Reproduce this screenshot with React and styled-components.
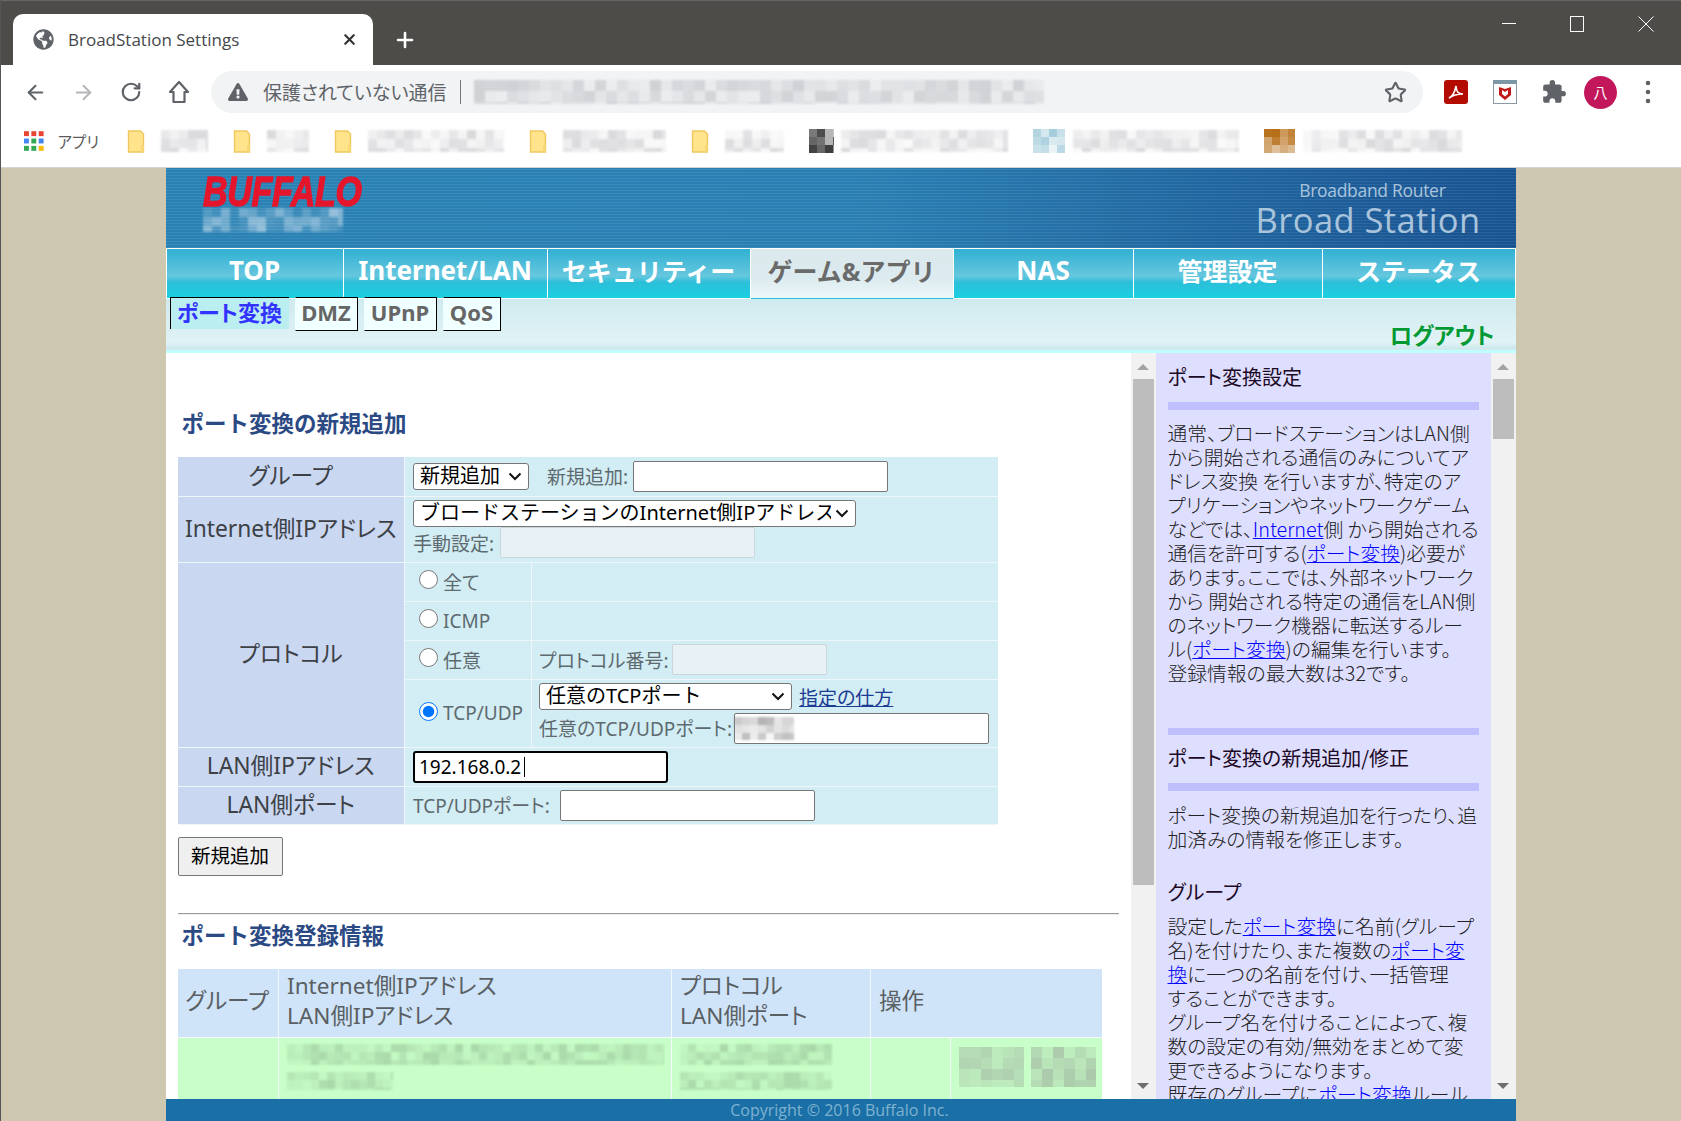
import * as React from 'react';
import styled, { createGlobalStyle } from 'styled-components';
import { ArrowLeft, ArrowRight, RotateCw, Star, X, Plus } from 'lucide-react';
import { FaGlobeAmericas, FaExclamationTriangle } from 'react-icons/fa';
import { MdExtension } from 'react-icons/md';

const JP = '"Noto Sans", "Noto Sans CJK JP", sans-serif';
const CHEVRON = "url(\"data:image/svg+xml,%3Csvg xmlns='http://www.w3.org/2000/svg' width='14' height='9' viewBox='0 0 14 9'%3E%3Cpath d='M1.5 1.5 7 7l5.5-5.5' fill='none' stroke='%23111' stroke-width='2'/%3E%3C/svg%3E\")";

const GlobalStyle = createGlobalStyle`
    html, body {
        margin: 0;
        padding: 0;
        height: 1121px;
        overflow: hidden;
        background: #cdc8af;
        font-family: ${JP};
    }
    * { box-sizing: border-box; }
`;

const Window = styled.div`
    width: 1681px;
    height: 1121px;
    display: flex;
    flex-direction: column;
    overflow: hidden;
    border-left: 1px solid #555;
`;

/* browser chrome */
const TabStrip = styled.div`
    height: 65px;
    flex: none;
    background: #4d4c49;
    border-top: 1px solid #666;
    display: flex;
    align-items: flex-end;
    padding-left: 12px;
`;

const ActiveTab = styled.div`
    width: 360px;
    height: 51px;
    background: #fff;
    border-radius: 10px 10px 0 0;
    display: flex;
    align-items: center;
    padding: 0 15px 0 20px;
    color: #45474a;
    font-family: "Open Sans", sans-serif;
    font-size: 17px;
    gap: 14px;
    & > span { flex: 1; white-space: nowrap; }
`;

const NewTab = styled.div`
    color: #fff;
    margin: 0 0 13px 20px;
    display: flex;
`;

const WindowButtons = styled.div`
    margin-left: auto;
    align-self: flex-start;
    display: flex;
    gap: 53px;
    padding: 15px 27px 0 0;
`;

const Toolbar = styled.div`
    height: 60px;
    flex: none;
    background: #fff;
    display: flex;
    align-items: center;
    padding: 0 0 6px 23px;
    color: #5f6368;
`;

const NavIcon = styled.div`
    width: 48px;
    display: flex;
    color: ${(p) => (p.$off ? '#b4b6b9' : '#5f6368')};
`;

const Omnibox = styled.div`
    width: 1212px;
    height: 42px;
    margin-left: -5px;
    border-radius: 21px;
    background: #f1f3f4;
    display: flex;
    align-items: center;
    padding: 0 16px 0 17px;
`;

const SecurityText = styled.span`
    margin-left: 15px;
    font-size: 19px;
    color: #5f6368;
    font-family: "Noto Sans CJK JP", sans-serif;
    white-space: nowrap;
    padding-right: 14px;
    border-right: 1px solid #777;
    line-height: 24px;
    font-feature-settings: "palt";
`;

const ExtensionTray = styled.div`
    margin-left: 21px;
    display: flex;
    align-items: center;
`;

const Avatar = styled.div`
    width: 33px;
    height: 33px;
    border-radius: 50%;
    background: #c2185b;
    color: #fff;
    font-size: 14px;
    font-family: "Noto Sans CJK JP", sans-serif;
    display: flex;
    align-items: center;
    justify-content: center;
    margin: 0 28px 0 17px;
`;

const BookmarkBar = styled.div`
    height: 43px;
    flex: none;
    background: #fff;
    border-bottom: 1px solid #d4d4d4;
    display: flex;
    align-items: center;
    padding: 0 0 10px 23px;
    gap: 25px;
`;

const AppsLink = styled.div`
    display: flex;
    align-items: center;
    gap: 14px;
    width: 75px;
    font-size: 15.5px;
    color: #5a5a5a;
    font-family: "Noto Sans CJK JP", sans-serif;
    font-feature-settings: "palt";
    white-space: nowrap;
    margin-right: 3px;
`;

const Bookmark = styled.div`
    display: flex;
    align-items: center;
    gap: ${(p) => p.$gap || 16}px;
`;

/* router page */
const PageArea = styled.div`
    flex: 1;
    min-height: 0;
    display: flex;
    justify-content: center;
    background: #cdc8af;
    padding-right: 1px;
`;

const Frame = styled.div`
    width: 1350px;
    display: flex;
    flex-direction: column;
    background: #fff;
`;

const Banner = styled.header`
    height: 81px;
    flex: none;
    display: flex;
    justify-content: space-between;
    background:
        repeating-linear-gradient(0deg, rgba(255, 255, 255, .07) 0 1px, rgba(0, 0, 0, .02) 1px 3px),
        linear-gradient(90deg, #2a84b6, #2b82b6 50%, #1c5a98 92%, #1a5493);
    border-bottom: 1px solid #fff;
`;

const Brand = styled.div`
    padding: 7px 0 0 37px;
    display: flex;
    flex-direction: column;
`;

const BrandName = styled.div`
    height: 33px;
    font-family: "Liberation Sans", sans-serif;
    font-style: italic;
    font-weight: 700;
    font-size: 43px;
    line-height: 33px;
    color: #e5162c;
    letter-spacing: -.3px;
    transform: scaleX(.79);
    transform-origin: left center;
    -webkit-text-stroke: 1.4px #e5162c;
`;

const Product = styled.div`
    padding: 11px 35px 0 0;
    text-align: right;
    color: #a9c4db;
    font-family: "Open Sans", sans-serif;
    & > small {
        display: block;
        font-size: 17.5px;
        line-height: 22px;
        padding-right: 35px;
        letter-spacing: -.3px;
    }
    & > strong {
        display: block;
        font-weight: 400;
        font-size: 34.5px;
        line-height: 38px;
        letter-spacing: .4px;
    }
`;

const NavBar = styled.nav`
    height: 50px;
    flex: none;
    display: grid;
    grid-template-columns: 177px 204px 203px 203px 180px 189px 1fr;
    padding-left: 1px;
    background: #fff;
`;

const NavTab = styled.div`
    display: flex;
    align-items: center;
    justify-content: center;
    font-size: ${(p) => (p.$latin ? 26 : 25)}px;
    font-weight: 700;
    white-space: nowrap;
    border-right: 1px solid #fff;
    border-bottom: 1px solid ${(p) => (p.$active ? '#2cc0d8' : '#fff')};
    color: ${(p) => (p.$active ? '#6a6a6a' : '#fff')};
    padding-bottom: 7px;
    background: ${(p) => (p.$active
        ? 'linear-gradient(#dbe9ed, #dcebef 60%, #ecf7f9)'
        : 'linear-gradient(#30b0d3, #66c7de 55%, #2cbfd9 68%, #1bd0e1)')};
`;

const SubNav = styled.div`
    height: 54px;
    flex: none;
    display: flex;
    justify-content: space-between;
    padding-left: 4px;
    background: linear-gradient(#cfeaef, #e1f3f6 85%, #cfe9ed 96%);
    border-bottom: 3px solid #bfffff;
`;

const SubTabs = styled.div`
    display: flex;
    gap: 6px;
    margin-top: -2px;
    align-items: flex-start;
`;

const SubTab = styled.div`
    height: ${(p) => (p.$active ? 32 : 34)}px;
    width: ${(p) => p.$w}px;
    display: flex;
    align-items: center;
    justify-content: center;
    font-size: 22px;
    font-weight: 700;
    white-space: nowrap;
    padding-bottom: 5px;
    color: ${(p) => (p.$active ? '#3333ff' : '#666')};
    background: ${(p) => (p.$active ? '#bbeef0' : '#f0ffff')};
    border-top: 1px solid #000;
    border-left: 1px solid ${(p) => (p.$active ? '#000' : '#f0ffff')};
    border-right: ${(p) => (p.$active ? 'none' : '1px solid #000')};
    border-bottom: ${(p) => (p.$active ? 'none' : '1px solid #000')};
    font-feature-settings: "palt";
`;

const Logout = styled.a`
    align-self: flex-end;
    padding: 0 21px 0 0;
    font-size: 22.4px;
    line-height: 28px;
    font-weight: 700;
    color: #009933;
    font-feature-settings: "palt";
`;

const Workspace = styled.main`
    flex: 1;
    min-height: 0;
    display: flex;
    overflow: hidden;
`;

const FormPane = styled.section`
    width: 965px;
    flex: none;
    padding: 56px 0 0 12px;
    overflow: hidden;
`;

const Heading = styled.h2`
    margin: 0 0 18px 4px;
    font-size: 22.5px;
    line-height: 30px;
    font-weight: 700;
    color: #2b4a84;
`;

const FormTable = styled.table`
    width: 820px;
    table-layout: fixed;
    border-collapse: collapse;
    font-size: 19px;
    color: #5d6a70;
    font-feature-settings: "palt";
    & td {
        padding: 0;
        background: #d3edf4;
        border: solid #eef6fa;
        border-width: 0 0 1px 1px;
        white-space: nowrap;
    }
`;

const LabelCell = styled.td`
    && {
        background: #c9d7f1;
        color: #3d4146;
        font-size: 22.8px;
        text-align: center;
        border-left: none;
        padding-bottom: 4px;
    }
`;

const Row = styled.tr`
    height: ${(p) => p.$h}px;
`;

const Field = styled.div`
    display: flex;
    align-items: center;
    gap: ${(p) => p.$gap || 0}px;
    padding-left: ${(p) => p.$pad || 8}px;
    height: ${(p) => (p.$h ? `${p.$h}px` : 'auto')};
`;

const GroupLabel = styled.span`
    margin: 0 5px 0 18px;
`;

const RadioField = styled.label`
    display: flex;
    align-items: center;
    padding-left: 14px;
    font-size: 19px;
    & > input {
        width: 19px;
        height: 19px;
        margin: 0 5px 4px 0;
    }
`;

const Pick = styled.select`
    appearance: none;
    width: ${(p) => p.$w}px;
    height: 27px;
    font-family: ${JP};
    font-size: 20px;
    line-height: 24px;
    color: #000;
    background: #fff ${CHEVRON} no-repeat right 6px center;
    border: 1px solid #767676;
    border-radius: 3px;
    padding: 0 24px 4px 6px;
    font-feature-settings: normal;
`;

const TextBox = styled.input`
    width: ${(p) => p.$w || 255}px;
    height: 31px;
    font-family: ${JP};
    font-size: 19px;
    padding: 0 5px;
    border: 1px solid ${(p) => (p.disabled ? '#ccd6da' : '#767676')};
    border-radius: 2px;
    background: ${(p) => (p.disabled ? '#e8f2f6' : '#fff')};
`;

const FocusWrap = styled.div`
    position: relative;
    display: flex;
`;

const FocusBox = styled(TextBox)`
    width: 255px;
    height: 32px;
    border: 2px solid #000;
    border-radius: 3px;
    color: #000;
    outline: none;
    padding: 0 4px;
`;

const Caret = styled.span`
    position: absolute;
    left: 111px;
    top: 6px;
    width: 1px;
    height: 20px;
    background: #000;
`;

const HelpLink = styled.a`
    color: #1c3c94;
    text-decoration: underline;
    font-size: 19px;
`;

const Overlay = styled.div`
    position: absolute;
    left: ${(p) => p.$x}px;
    top: 4px;
`;

const AddButton = styled.button`
    display: block;
    width: 105px;
    height: 39px;
    margin-top: 12px;
    padding: 0 0 4px;
    font-family: ${JP};
    font-size: 19.5px;
    color: #000;
    background: #efefef;
    border: 1px solid #767676;
    border-radius: 2px;
`;

const Rule = styled.hr`
    width: 941px;
    margin: 37px 0 6px;
    border: none;
    border-top: 1px solid #999;
    border-bottom: 1px solid #eee;
`;

const ListTable = styled.table`
    width: 924px;
    table-layout: fixed;
    border-collapse: collapse;
    font-size: 22.6px;
    line-height: 30px;
    color: #5a5f63;
    font-feature-settings: "palt";
    & td {
        padding: 0 0 4px 8px;
        border: solid #f4f8fb;
        border-width: 0 0 1px 1px;
        white-space: nowrap;
    }
    & td:first-child { border-left: none; }
`;

const HeadRow = styled.tr`
    height: 69px;
    & td { background: #cfe4f9; }
`;

const DataRow = styled.tr`
    height: 62px;
    & td { background: #c8ffc8; }
`;

const MosaicStack = styled.div`
    display: flex;
    flex-direction: column;
    gap: 7px;
`;

const MosaicButtons = styled.div`
    display: flex;
    gap: 7px;
`;

const Scrollbar = styled.div`
    width: 25px;
    flex: none;
    background: #f1f1f1;
    display: flex;
    flex-direction: column;
    align-items: center;
    padding: 11px 0 10px;
`;

const ScrollArrow = styled.span`
    width: 0;
    height: 0;
    border-left: 6px solid transparent;
    border-right: 6px solid transparent;
    border-bottom: ${(p) => (p.$down ? 'none' : '6px solid #a3a3a3')};
    border-top: ${(p) => (p.$down ? '6px solid #6e6e6e' : 'none')};
    margin-top: ${(p) => (p.$down ? 'auto' : '0')};
`;

const ScrollThumb = styled.span`
    width: 21px;
    height: ${(p) => p.$h}px;
    margin-top: 9px;
    background: #bdbdbd;
`;

const HelpPane = styled.aside`
    width: 335px;
    flex: none;
    padding: 12px 12px 0;
    background: #dedeff;
    overflow: hidden;
    font-size: 19.8px;
    font-weight: 300;
    line-height: 24px;
    color: #222;
    font-family: "Noto Sans CJK JP", sans-serif;
    white-space: nowrap;
    font-feature-settings: "palt";
`;

const HelpTitle = styled.div`
    color: #1d0a26;
    font-size: 20px;
    font-weight: 400;
    margin-top: ${(p) => p.$top || 0}px;
    padding-bottom: 2px;
`;

const HelpBar = styled.div`
    height: ${(p) => p.$h || 8}px;
    margin-top: ${(p) => p.$top}px;
    background: #bfbfff;
`;

const HelpText = styled.p`
    margin: ${(p) => p.$top}px 0 0;
    & > a {
        color: #0000ff;
        text-decoration: underline;
    }
`;

const Footer = styled.footer`
    height: 22px;
    flex: none;
    background: #1a70a6;
    color: #7fb2d0;
    font-size: 16px;
    line-height: 22px;
    text-align: center;
    font-family: "Open Sans", sans-serif;
    padding-right: 2px;
`;

const MosaicSvg = styled.svg`
    display: block;
    flex: none;
    filter: blur(${(p) => p.$blur}px);
`;

// pixelated redaction blocks, same look as the censored parts of the capture
const Mosaic = ({ w, h, tone = '#8f8f99', cell = 9, max = 0.34, min = 0.05, seed = 1, blur = 0.8 }) => {
    const rects = [];
    const cols = Math.ceil(w / cell);
    const rows = Math.ceil(h / cell);
    for (let y = 0; y < rows; y++) {
        for (let x = 0; x < cols; x++) {
            const n = Math.abs(Math.sin((x + 1) * 12.9898 + (y + 1) * 78.233 + seed) * 43758.5453) % 1;
            rects.push(
                <rect
                    key={`${x}-${y}`}
                    x={x * cell}
                    y={y * cell}
                    width={cell}
                    height={cell}
                    fill={tone}
                    opacity={min + (max - min) * n}
                />,
            );
        }
    }
    return (
        <MosaicSvg width={w} height={h} viewBox={`0 0 ${w} ${h}`} $blur={blur} aria-hidden="true">
            {rects}
        </MosaicSvg>
    );
};

const FolderIcon = () => (
    <svg width="18" height="23" viewBox="0 0 18 23">
        <path d="M1.5 1h12l3 3v18h-15z" fill="#ffe48c" stroke="#efc75e" strokeWidth="1.4" />
        <path d="M14 15h3v7h-3z" fill="#f7d774" />
    </svg>
);

const HomeIcon = () => (
    <svg width="22" height="24" viewBox="0 0 22 24" fill="none" stroke="#5f6368" strokeWidth="2.2">
        <path d="M11 2 2 12h3.5v10h11V12H20z" strokeLinejoin="round" />
    </svg>
);

const AppsIcon = () => {
    const colors = ['#ea4335', '#ea4335', '#ea4335', '#4285f4', '#34a853', '#4285f4', '#34a853', '#34a853', '#fbbc04'];
    return (
        <svg width="20" height="20" viewBox="0 0 20 20">
            {colors.map((c, i) => (
                <rect key={i} x={(i % 3) * 7.5} y={Math.floor(i / 3) * 7.5} width="5" height="5" fill={c} />
            ))}
        </svg>
    );
};

const AcrobatIcon = () => (
    <svg width="24" height="24" viewBox="0 0 24 24" style={{ marginRight: 25 }}>
        <rect width="24" height="24" rx="3" fill="#b30b00" />
        <path d="M5 18c3-1 6-6 7-12 .5 6 2 8 7 8-5 0-10 1-14 4z" fill="none" stroke="#fff" strokeWidth="1.6" />
    </svg>
);

const McAfeeIcon = () => (
    <svg width="24" height="24" viewBox="0 0 24 24" style={{ marginRight: 24 }}>
        <rect x=".5" y=".5" width="23" height="23" fill="#fff" stroke="#8a9aa5" />
        <rect width="24" height="4" fill="#7e97a6" />
        <path d="M6 7l6 2 6-2v8l-6 5-6-5z" fill="#c01818" />
        <path d="M9 10v4l3 2.5 3-2.5v-4l-3 2z" fill="#fff" />
    </svg>
);

const DotsIcon = () => (
    <svg width="6" height="24" viewBox="0 0 6 24" fill="#5f6368">
        <circle cx="3" cy="3" r="2.3" />
        <circle cx="3" cy="12" r="2.3" />
        <circle cx="3" cy="21" r="2.3" />
    </svg>
);

const WindowIcon = ({ kind }) => (
    <svg width="16" height="16" viewBox="0 0 16 16" fill="none" stroke="#fff" strokeWidth="1">
        {kind === 'min' && <path d="M2 7.5h15" />}
        {kind === 'max' && <rect x="1.5" y=".5" width="13" height="15" />}
        {kind === 'close' && <path d="M.5.5l15 15M15.5.5l-15 15" />}
    </svg>
);

const App = () => (
    <Window>
        <GlobalStyle />
        <TabStrip>
            <ActiveTab>
                <FaGlobeAmericas size={21} color="#5f6368" />
                <span>BroadStation Settings</span>
                <X size={17} strokeWidth={3} color="#333" />
            </ActiveTab>
            <NewTab><Plus size={24} strokeWidth={2.6} /></NewTab>
            <WindowButtons>
                <WindowIcon kind="min" />
                <WindowIcon kind="max" />
                <WindowIcon kind="close" />
            </WindowButtons>
        </TabStrip>

        <Toolbar>
            <NavIcon><ArrowLeft size={23} strokeWidth={2.2} /></NavIcon>
            <NavIcon $off><ArrowRight size={23} strokeWidth={2} /></NavIcon>
            <NavIcon><RotateCw size={22} strokeWidth={2.4} /></NavIcon>
            <NavIcon><HomeIcon /></NavIcon>
            <Omnibox>
                <FaExclamationTriangle size={20} color="#5f6368" />
                <SecurityText>保護されていない通信</SecurityText>
                <span style={{ width: 13 }} />
                <Mosaic w={570} h={24} cell={11} seed={3} />
                <span style={{ flex: 1 }} />
                <Star size={23} strokeWidth={2.2} color="#5f6368" />
            </Omnibox>
            <ExtensionTray>
                <AcrobatIcon />
                <McAfeeIcon />
                <MdExtension size={26} color="#5f6368" />
                <Avatar>八</Avatar>
                <DotsIcon />
            </ExtensionTray>
        </Toolbar>

        <BookmarkBar>
            <AppsLink><AppsIcon />アプリ</AppsLink>
            <Bookmark><FolderIcon /><Mosaic w={47} h={22} seed={4} /></Bookmark>
            <Bookmark><FolderIcon /><Mosaic w={42} h={22} seed={5} /></Bookmark>
            <Bookmark><FolderIcon /><Mosaic w={136} h={22} seed={6} /></Bookmark>
            <Bookmark><FolderIcon /><Mosaic w={103} h={22} seed={7} /></Bookmark>
            <Bookmark><FolderIcon /><Mosaic w={59} h={22} seed={8} /></Bookmark>
            <Bookmark $gap={7}>
                <Mosaic w={25} h={24} cell={8} tone="#333" max={0.95} min={0.25} seed={2} blur={0.2} />
                <Mosaic w={167} h={22} seed={9} />
            </Bookmark>
            <Bookmark $gap={8}>
                <Mosaic w={32} h={24} cell={8} tone="#7fb8cc" max={0.7} min={0.1} seed={10} blur={0.2} />
                <Mosaic w={166} h={22} seed={11} />
            </Bookmark>
            <Bookmark $gap={8}>
                <Mosaic w={31} h={24} cell={8} tone="#b46a10" max={1} min={0.4} seed={12} blur={0.2} />
                <Mosaic w={159} h={22} seed={13} />
            </Bookmark>
        </BookmarkBar>

        <PageArea>
            <Frame>
                <Banner>
                    <Brand>
                        <BrandName>BUFFALO</BrandName>
                        <Mosaic w={140} h={24} cell={9} tone="#cfe0f0" max={0.65} min={0.05} seed={14} />
                    </Brand>
                    <Product>
                        <small>Broadband Router</small>
                        <strong>Broad Station</strong>
                    </Product>
                </Banner>

                <NavBar>
                    <NavTab $latin>TOP</NavTab>
                    <NavTab $latin>Internet/LAN</NavTab>
                    <NavTab>セキュリティー</NavTab>
                    <NavTab $active>ゲーム&amp;アプリ</NavTab>
                    <NavTab $latin>NAS</NavTab>
                    <NavTab>管理設定</NavTab>
                    <NavTab>ステータス</NavTab>
                </NavBar>

                <SubNav>
                    <SubTabs>
                        <SubTab $active $w={119}>ポート変換</SubTab>
                        <SubTab $w={63}>DMZ</SubTab>
                        <SubTab $w={73}>UPnP</SubTab>
                        <SubTab $w={58}>QoS</SubTab>
                    </SubTabs>
                    <Logout>ログアウト</Logout>
                </SubNav>

                <Workspace>
                    <FormPane>
                        <Heading>ポート変換の新規追加</Heading>
                        <FormTable>
                            <colgroup>
                                <col style={{ width: 227 }} />
                                <col style={{ width: 127 }} />
                                <col />
                            </colgroup>
                            <tbody>
                                <Row $h={39}>
                                    <LabelCell>グループ</LabelCell>
                                    <td colSpan={2}>
                                        <Field>
                                            <Pick $w={116} defaultValue="new"><option value="new">新規追加</option></Pick>
                                            <GroupLabel>新規追加:</GroupLabel>
                                            <TextBox />
                                        </Field>
                                    </td>
                                </Row>
                                <Row $h={66}>
                                    <LabelCell>Internet側IPアドレス</LabelCell>
                                    <td colSpan={2}>
                                        <Field $h={27}>
                                            <Pick $w={443} defaultValue="bs">
                                                <option value="bs">ブロードステーションのInternet側IPアドレス</option>
                                            </Pick>
                                        </Field>
                                        <Field $h={31} $gap={6}>
                                            <span>手動設定:</span>
                                            <TextBox disabled />
                                        </Field>
                                    </td>
                                </Row>
                                <Row $h={39}>
                                    <LabelCell rowSpan={4}>プロトコル</LabelCell>
                                    <td><RadioField><input type="radio" name="proto" />全て</RadioField></td>
                                    <td />
                                </Row>
                                <Row $h={39}>
                                    <td><RadioField><input type="radio" name="proto" />ICMP</RadioField></td>
                                    <td />
                                </Row>
                                <Row $h={39}>
                                    <td><RadioField><input type="radio" name="proto" />任意</RadioField></td>
                                    <td>
                                        <Field $pad={7} $gap={3}>
                                            <span>プロトコル番号:</span>
                                            <TextBox disabled $w={155} />
                                        </Field>
                                    </td>
                                </Row>
                                <Row $h={68}>
                                    <td><RadioField><input type="radio" name="proto" defaultChecked />TCP/UDP</RadioField></td>
                                    <td>
                                        <Field $pad={7} $gap={7} $h={30}>
                                            <Pick $w={253} defaultValue="any"><option value="any">任意のTCPポート</option></Pick>
                                            <HelpLink href="#">指定の仕方</HelpLink>
                                        </Field>
                                        <Field $pad={7} $gap={2} $h={33}>
                                            <span>任意のTCP/UDPポート:</span>
                                            <FocusWrap>
                                                <TextBox />
                                                <Overlay $x={0}>
                                                    <Mosaic w={60} h={23} cell={8} seed={15} tone="#777" max={0.6} />
                                                </Overlay>
                                            </FocusWrap>
                                        </Field>
                                    </td>
                                </Row>
                                <Row $h={39}>
                                    <LabelCell>LAN側IPアドレス</LabelCell>
                                    <td colSpan={2}>
                                        <Field>
                                            <FocusWrap>
                                                <FocusBox defaultValue="192.168.0.2" />
                                                <Caret />
                                            </FocusWrap>
                                        </Field>
                                    </td>
                                </Row>
                                <Row $h={38}>
                                    <LabelCell>LAN側ポート</LabelCell>
                                    <td colSpan={2}>
                                        <Field $gap={10}>
                                            <span>TCP/UDPポート:</span>
                                            <TextBox />
                                        </Field>
                                    </td>
                                </Row>
                            </tbody>
                        </FormTable>
                        <AddButton type="button">新規追加</AddButton>
                        <Rule />
                        <Heading>ポート変換登録情報</Heading>
                        <ListTable>
                            <colgroup>
                                <col style={{ width: 101 }} />
                                <col style={{ width: 393 }} />
                                <col style={{ width: 199 }} />
                                <col style={{ width: 80 }} />
                                <col />
                            </colgroup>
                            <tbody>
                                <HeadRow>
                                    <td>グループ</td>
                                    <td>Internet側IPアドレス<br />LAN側IPアドレス</td>
                                    <td>プロトコル<br />LAN側ポート</td>
                                    <td colSpan={2}>操作</td>
                                </HeadRow>
                                <DataRow>
                                    <td />
                                    <td>
                                        <MosaicStack>
                                            <Mosaic w={377} h={21} cell={8} tone="#6f8f6f" seed={16} />
                                            <Mosaic w={106} h={18} cell={8} tone="#6f8f6f" seed={17} />
                                        </MosaicStack>
                                    </td>
                                    <td>
                                        <MosaicStack>
                                            <Mosaic w={152} h={21} cell={8} tone="#6f8f6f" seed={18} />
                                            <Mosaic w={152} h={18} cell={8} tone="#6f8f6f" seed={19} />
                                        </MosaicStack>
                                    </td>
                                    <td />
                                    <td>
                                        <MosaicButtons>
                                            <Mosaic w={65} h={40} cell={11} tone="#888" min={0.15} max={0.45} seed={20} blur={0.6} />
                                            <Mosaic w={65} h={40} cell={11} tone="#888" min={0.15} max={0.45} seed={21} blur={0.6} />
                                        </MosaicButtons>
                                    </td>
                                </DataRow>
                            </tbody>
                        </ListTable>
                    </FormPane>

                    <Scrollbar>
                        <ScrollArrow />
                        <ScrollThumb $h={506} />
                        <ScrollArrow $down />
                    </Scrollbar>

                    <HelpPane>
                        <HelpTitle>ポート変換設定</HelpTitle>
                        <HelpBar $top={11} />
                        <HelpText $top={11}>
                            通常、ブロードステーションはLAN側<br />
                            から開始される通信のみについてア<br />
                            ドレス変換 を行いますが、特定のア<br />
                            プリケーションやネットワークゲーム<br />
                            などでは、<a href="#">Internet</a>側 から開始される<br />
                            通信を許可する(<a href="#">ポート変換</a>)必要が<br />
                            あります。ここでは、外部ネットワーク<br />
                            から 開始される特定の通信をLAN側<br />
                            のネットワーク機器に転送するルー<br />
                            ル(<a href="#">ポート変換</a>)の編集を行います。<br />
                            登録情報の最大数は32です。
                        </HelpText>
                        <HelpBar $top={43} $h={7} />
                        <HelpTitle $top={11}>ポート変換の新規追加/修正</HelpTitle>
                        <HelpBar $top={11} />
                        <HelpText $top={12}>
                            ポート変換の新規追加を行ったり、追<br />
                            加済みの情報を修正します。
                        </HelpText>
                        <HelpTitle $top={29}>グループ</HelpTitle>
                        <HelpText $top={8}>
                            設定した<a href="#">ポート変換</a>に名前(グループ<br />
                            名)を付けたり、また複数の<a href="#">ポート変</a><br />
                            <a href="#">換</a>に一つの名前を付け、一括管理<br />
                            することができます。<br />
                            グループ名を付けることによって、複<br />
                            数の設定の有効/無効をまとめて変<br />
                            更できるようになります。<br />
                            既存のグループに<a href="#">ポート変換</a>ルール
                        </HelpText>
                    </HelpPane>

                    <Scrollbar>
                        <ScrollArrow />
                        <ScrollThumb $h={60} />
                        <ScrollArrow $down />
                    </Scrollbar>
                </Workspace>

                <Footer>Copyright © 2016 Buffalo Inc.</Footer>
            </Frame>
        </PageArea>
    </Window>
);

export default App;
